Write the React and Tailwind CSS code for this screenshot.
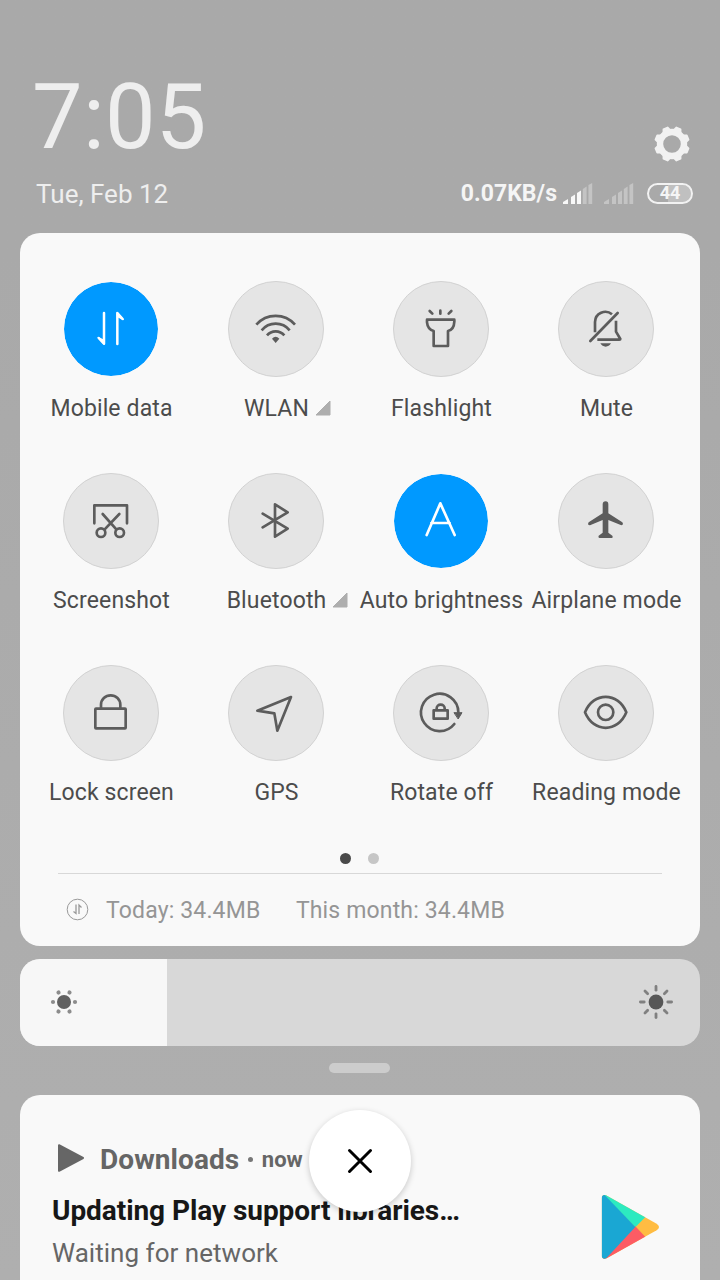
import React from "react";

const line = {
  fill: "none",
  stroke: "currentColor",
  strokeWidth: 8,
  strokeLinecap: "round",
  strokeLinejoin: "round",
};

const icons = {
  data: (
    <g {...line} strokeWidth={7.5}>
      <path d="M-21-48V44L-37 27" />
      <path d="M-21 45L-38 26L-21 34Z" fill="currentColor" strokeWidth={4} />
      <path d="M19 45V-48L35-30" />
      <path d="M19-49L36-29L19-38Z" fill="currentColor" strokeWidth={4} />
    </g>
  ),
  wifi: (
    <g {...line} strokeLinecap="butt">
      <path d="M-59-13A77 77 0 0 1 57-13" />
      <path d="M-43 4A54 54 0 0 1 41 4" />
      <path d="M-27 19A34 34 0 0 1 25 19" />
      <path d="M-12 29Q-1 18 10 29L-1 42Z" fill="currentColor" stroke="none" />
    </g>
  ),
  flashlight: (
    <g {...line}>
      <path d="M-42-28H40V-22Q39 2 21 6V51H-22V6Q-40 1-42-20Z" />
      <path d="M-34-54L-26-46M-2-55V-46M31-54L23-46" />
    </g>
  ),
  mute: (
    <g {...line}>
      <path d="M-33 10V-21A31 31 0 0 1 18-44" strokeLinecap="butt" />
      <path d="M30-25V8L43 30Q43 32 40 32H-26" strokeLinecap="butt" />
      <path d="M-47 36L35-48" />
      <path d="M-17 43H15Q9 53-1 53Q-11 53-17 43Z" fill="currentColor" stroke="none" />
    </g>
  ),
  screenshot: (
    <g {...line}>
      <path d="M-50 7V-47H48V7" />
      <path d="M-25-21L16 25M25-21L-19 25" />
      <circle cx="-30" cy="35" r="13" />
      <circle cx="26" cy="35" r="13" />
    </g>
  ),
  bluetooth: (
    <path {...line} d="M-40-22L35 23L-3 47V-50L35-26L-40 19" />
  ),
  auto: (
    <path {...line} d="M-43 42L-2-53L41 42M-29 6H26" />
  ),
  airplane: (
    <path
      fill="currentColor"
      d="M-10-50Q-10-59-1-59Q7-59 7-50V-23L49 4Q54 12 46 13L7-3V35L19 44Q22 51 17 51H-19Q-24 51-22 44L-10 35V-3L-48 13Q-57 12-52 4L-10-23Z"
    />
  ),
  lock: (
    <g {...line}>
      <rect x="-47" y="-13" width="91" height="59" rx="2" />
      <path d="M-30-15V-25A29 28 0 0 1 28-25V-15" />
    </g>
  ),
  gps: (
    <path {...line} d="M45-48L-56-7L-5 1L4 53Z" />
  ),
  rotate: (
    <g {...line}>
      <path d="M52-2A56 56 0 1 0 40 33" />
      <path d="M40-1H63L52 17Z" fill="currentColor" strokeWidth={3} />
      <rect x="-22" y="-8" width="42" height="25" />
      <path d="M-13-10V-14A12 11 0 0 1 11-14V-10" />
    </g>
  ),
  eye: (
    <g {...line}>
      <path d="M-63-2C-38-64 36-64 61-2C36 60-38 60-63-2Z" />
      <circle cx="-1" cy="-2" r="23" />
    </g>
  ),
};

const tiles = [
  { label: "Mobile data", icon: "data", on: true },
  { label: "WLAN", icon: "wifi", more: true },
  { label: "Flashlight", icon: "flashlight" },
  { label: "Mute", icon: "mute" },
  { label: "Screenshot", icon: "screenshot" },
  { label: "Bluetooth", icon: "bluetooth", more: true },
  { label: "Auto brightness", icon: "auto", on: true },
  { label: "Airplane mode", icon: "airplane" },
  { label: "Lock screen", icon: "lock" },
  { label: "GPS", icon: "gps" },
  { label: "Rotate off", icon: "rotate" },
  { label: "Reading mode", icon: "eye" },
];

function Tile({ label, icon, on, more }) {
  return (
    <div className="flex h-48 flex-col items-center">
      <div
        className={
          on
            ? "size-24 rounded-full border border-[#f9f9f9] bg-[#0099ff] bg-clip-padding text-white"
            : "size-24 rounded-full border border-[#d2d2d2] bg-[#e5e5e5] text-[#5c5c5c]"
        }
      >
        <svg className="-m-px block size-24" viewBox="-144 -144 288 288">
          {icons[icon]}
        </svg>
      </div>
      <div className="relative mt-[18px] pl-px text-[23px] leading-7 tracking-[0.13px] whitespace-nowrap text-[#4c4c4c]">
        {label}
        {more && (
          <svg className="absolute top-[5px] left-full ml-[6px] h-4 w-4" viewBox="0 0 16 16">
            <path d="M15 1V15H1Z" fill="#aeaeae" stroke="#aeaeae" strokeLinejoin="round" />
          </svg>
        )}
      </div>
    </div>
  );
}

function Gear() {
  return (
    <svg className="size-[38px]" viewBox="-19 -19 38 38">
      <circle r="12" fill="none" stroke="#f2f2f2" strokeWidth="6.4" />
      {[22.5, 67.5, 112.5, 157.5, 202.5, 247.5, 292.5, 337.5].map((a) => (
        <path
          key={a}
          d="M-4-13L-2.3-17H2.3L4-13Z"
          fill="#f2f2f2"
          stroke="#f2f2f2"
          strokeWidth="1.6"
          strokeLinejoin="round"
          transform={`rotate(${a})`}
        />
      ))}
    </svg>
  );
}

function Signal({ level }) {
  const bars = ["M0 21V19L5 16V21Z", "M8 21V14L12 11.5V21Z", "M14 21V10L18 7.5V21Z", "M19.8 21V6L23.6 3.5V21Z", "M25.4 21V2L29.2 0V21Z"];
  return (
    <svg className="h-[21px] w-[30px]" viewBox="0 0 30 21">
      {bars.map((d, i) => (
        <path key={d} d={d} fill={i < level ? "#f8f8f8" : "#c4c4c4"} />
      ))}
    </svg>
  );
}

export default function App() {
  return (
    <div className="flex h-[1280px] w-[720px] flex-col overflow-hidden bg-linear-to-b from-[#a9a9a9] from-20% to-[#afafaf] px-5 font-[Roboto,sans-serif]">
      <header className="flex h-[233px] shrink-0 justify-between pt-[72px]">
        <div className="pl-3 text-[#eeeeee]">
          <div className="text-[90px] leading-[92px] tracking-[0.3px]">7:05</div>
          <div className="mt-[14px] pl-1 text-[26px] leading-8">Tue, Feb 12</div>
        </div>
        <div className="flex flex-col items-end pt-[53px] pr-[7px]">
          <div className="pr-[2.5px]">
            <Gear />
          </div>
          <div className="mt-[16px] flex h-7 items-center">
            <span className="mt-[2px] text-[23px] leading-7 font-bold tracking-[0.05px] text-[#f5f5f5]">0.07KB/s</span>
            <div className="ml-[6px] flex gap-[11px]">
              <Signal level={3} />
              <Signal level={0} />
            </div>
            <div className="ml-[13px] flex h-[21px] w-[46px] items-center justify-center rounded-full border-2 border-[#f2f2f2] bg-linear-to-r from-transparent from-45% to-[#c0c0c0] to-45% bg-clip-padding p-px text-[18px] leading-none font-bold text-[#f5f5f5]">
              44
            </div>
          </div>
        </div>
      </header>

      <section className="flex h-[713px] shrink-0 flex-col rounded-[20px] bg-[#f9f9f9] pt-12">
        <div className="ml-[8.5px] grid grid-cols-[repeat(4,165px)] gap-0">
          {tiles.map((t) => (
            <Tile key={t.label} {...t} />
          ))}
        </div>
        <div className="-mt-1 flex justify-center gap-[17px] pr-px">
          <span className="size-[11px] rounded-full bg-[#4a4a4a]" />
          <span className="size-[11px] rounded-full bg-[#c6c6c6]" />
        </div>
        <div className="mx-[38px] mt-[9px] flex grow items-center border-t border-[#d8d8d8] text-[23px] leading-7 tracking-[0.15px] text-[#959595]">
          <svg className="mb-px ml-2 size-[23px]" viewBox="0 0 23 23" fill="none" stroke="#999" strokeWidth="1">
            <circle cx="11.5" cy="11.5" r="10.3" />
            <path d="M10 6.5V15.5L7.5 13.5M13 16V7L15.5 9.5" strokeWidth="1.3" />
          </svg>
          <span className="mt-[2px] ml-[17px]">Today: 34.4MB</span>
          <span className="mt-[2px] ml-[35.5px]">This month: 34.4MB</span>
        </div>
      </section>

      <div className="mt-[13px] flex h-[87px] shrink-0 overflow-hidden rounded-[20px] bg-[#d8d8d8]">
        <div className="flex w-[147px] items-center bg-[#f7f7f7] pb-px pl-[30px]">
          <svg className="size-7" viewBox="-14 -14 28 28">
            <circle r="7" fill="#606060" />
            {[0, 60, 120, 180, 240, 300].map((a) => (
              <circle key={a} cx="11" r="2.1" fill="#8c8c8c" transform={`rotate(${a})`} />
            ))}
          </svg>
        </div>
        <div className="flex grow items-center justify-end pr-[26px] pb-px">
          <svg className="size-9" viewBox="-18 -18 36 36">
            <circle r="7.4" fill="#565656" />
            {[0, 45, 90, 135, 180, 225, 270, 315].map((a) => (
              <path key={a} d="M11.8 0H15.6" stroke="#808080" strokeWidth="2.8" strokeLinecap="round" transform={`rotate(${a})`} />
            ))}
          </svg>
        </div>
      </div>

      <div className="mt-[17px] mr-px h-[10px] w-[61px] shrink-0 self-center rounded-full bg-[#cccccc]" />

      <section className="relative mt-[22px] h-[240px] shrink-0 rounded-[20px] bg-[#f9f9f9] pt-12 pl-8">
        <div className="flex h-8 items-center text-[#666666]">
          <svg className="mb-[2px] ml-[5px] h-[30px] w-[28px]" viewBox="0 0 28 30">
            <path d="M2 2.2L26 15L2 27.8Z" fill="#666666" stroke="#666666" strokeWidth="2" strokeLinejoin="round" />
          </svg>
          <span className="mt-px ml-[15px] text-[28px] leading-8 font-bold tracking-[0.08px]">Downloads</span>
          <span className="ml-[8.5px] size-[5px] rounded-full bg-[#777777]" />
          <span className="mt-px ml-[9px] text-[22px] leading-8 font-bold">now</span>
        </div>
        <div className="mt-5 text-[28px] leading-8 font-bold tracking-[-0.06px] text-[#171717]">Updating Play support libraries…</div>
        <div className="mt-[10px] text-[26px] leading-8 tracking-[0.03px] text-[#666666]">Waiting for network</div>

        <svg className="absolute top-[99px] left-[580px] h-[66px] w-[60px]" viewBox="0 0 180 198">
          <defs>
            <clipPath id="play">
              <path d="M5 14Q5 0 18 4L170 89Q184 99 170 109L20 193Q5 198 5 184Z" />
            </clipPath>
          </defs>
          <g clipPath="url(#play)">
            <path d="M0 0H180V198H0Z" fill="#ffbc42" />
            <path d="M8 0H86L137 68L106 100Z" fill="#2deac0" />
            <path d="M6 198H100L137 130L106 97Z" fill="#fd5c64" />
            <path d="M0 0H11L106 99L14 198H0Z" fill="#1aa7d3" />
          </g>
        </svg>

        <button className="absolute top-[15px] left-[289px] flex size-[102px] items-center justify-center rounded-full bg-white shadow-[0_2px_6px_rgba(0,0,0,0.2)]">
          <svg className="size-7" viewBox="-14 -14 28 28" stroke="#000" strokeWidth="3" strokeLinecap="round">
            <path d="M-10.5-10.5L10.5 10.5M10.5-10.5L-10.5 10.5" />
          </svg>
        </button>
      </section>
    </div>
  );
}
